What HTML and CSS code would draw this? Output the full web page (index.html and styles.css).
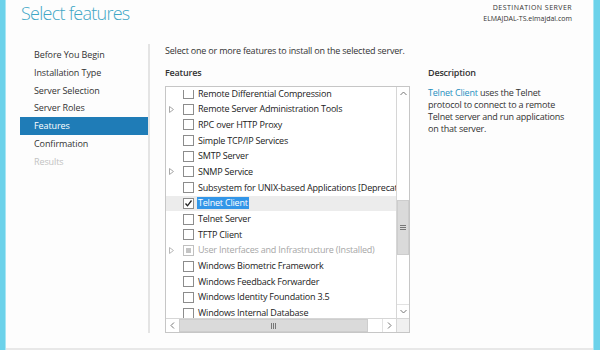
FILE: index.html
```html
<!DOCTYPE html>
<html>
<head>
<meta charset="utf-8">
<link rel="stylesheet" href="styles.css">
</head>
<body>
<div class="window">
  <div class="edge edge-left"></div>
  <div class="main">
    <header class="header">
      <h1 class="title">Select features</h1>
      <div class="dest">
        <div class="dest-cap">DESTINATION SERVER</div>
        <div>ELMAJDAL-TS.elmajdal.com</div>
      </div>
    </header>
    <div class="body">
      <nav class="nav">
        <div class="nav-item">Before You Begin</div>
        <div class="nav-item">Installation Type</div>
        <div class="nav-item">Server Selection</div>
        <div class="nav-item">Server Roles</div>
        <div class="nav-item active">Features</div>
        <div class="nav-item">Confirmation</div>
        <div class="nav-item disabled">Results</div>
      </nav>
      <section class="content">
        <p class="intro">Select one or more features to install on the selected server.</p>
        <div class="columns">
          <div class="features-col">
            <div class="label">Features</div>
            <div class="listbox">
              <div class="viewport">
                <div class="clip">
                  <ul class="rows">
                    <li class="row"><span class="exp"></span><span class="cb"></span><span class="txt">Remote Differential Compression</span></li>
                    <li class="row"><span class="exp"><svg width="5" height="7" viewBox="0 0 5 7"><polygon points="0.5,0.5 4.5,3.5 0.5,6.5" fill="none" stroke="#a8a8a8" stroke-width="1"/></svg></span><span class="cb"></span><span class="txt">Remote Server Administration Tools</span></li>
                    <li class="row"><span class="exp"></span><span class="cb"></span><span class="txt">RPC over HTTP Proxy</span></li>
                    <li class="row"><span class="exp"></span><span class="cb"></span><span class="txt">Simple TCP/IP Services</span></li>
                    <li class="row"><span class="exp"></span><span class="cb"></span><span class="txt">SMTP Server</span></li>
                    <li class="row"><span class="exp"><svg width="5" height="7" viewBox="0 0 5 7"><polygon points="0.5,0.5 4.5,3.5 0.5,6.5" fill="none" stroke="#a8a8a8" stroke-width="1"/></svg></span><span class="cb"></span><span class="txt">SNMP Service</span></li>
                    <li class="row"><span class="exp"></span><span class="cb"></span><span class="txt">Subsystem for UNIX-based Applications [Deprecated]</span></li>
                    <li class="row selected"><span class="exp"></span><span class="cb"><svg width="9" height="9" viewBox="0 0 9 9"><polyline points="1.5,4.5 3.5,6.8 7.5,1.5" fill="none" stroke="#222" stroke-width="1.3"/></svg></span><span class="txt sel">Telnet Client</span></li>
                    <li class="row"><span class="exp"></span><span class="cb"></span><span class="txt">Telnet Server</span></li>
                    <li class="row"><span class="exp"></span><span class="cb"></span><span class="txt">TFTP Client</span></li>
                    <li class="row dis"><span class="exp"><svg width="5" height="7" viewBox="0 0 5 7"><polygon points="0.5,0.5 4.5,3.5 0.5,6.5" fill="none" stroke="#b8b8b8" stroke-width="1"/></svg></span><span class="cb ind"><span class="ind-box"></span></span><span class="txt">User Interfaces and Infrastructure (Installed)</span></li>
                    <li class="row"><span class="exp"></span><span class="cb"></span><span class="txt">Windows Biometric Framework</span></li>
                    <li class="row"><span class="exp"></span><span class="cb"></span><span class="txt">Windows Feedback Forwarder</span></li>
                    <li class="row"><span class="exp"></span><span class="cb"></span><span class="txt">Windows Identity Foundation 3.5</span></li>
                    <li class="row"><span class="exp"></span><span class="cb"></span><span class="txt">Windows Internal Database</span></li>
                    <li class="row"><span class="exp"></span><span class="cb"></span><span class="txt">Windows PowerShell</span></li>
                  </ul>
                </div>
              </div>
              <div class="vscroll">
                <div class="sbtn"><svg width="7" height="5" viewBox="0 0 7 5"><polyline points="0.5,4 3.5,1 6.5,4" fill="none" stroke="#777" stroke-width="1"/></svg></div>
                <div class="vtrack">
                  <div class="vthumb"><svg width="6" height="5" viewBox="0 0 6 5"><path d="M0 0.5H6M0 2.5H6M0 4.5H6" stroke="#777" stroke-width="1"/></svg></div>
                </div>
                <div class="sbtn"><svg width="7" height="5" viewBox="0 0 7 5"><polyline points="0.5,1 3.5,4 6.5,1" fill="none" stroke="#777" stroke-width="1"/></svg></div>
              </div>
              <div class="hscroll">
                <div class="sbtn"><svg width="5" height="7" viewBox="0 0 5 7"><polyline points="4,0.5 1,3.5 4,6.5" fill="none" stroke="#777" stroke-width="1"/></svg></div>
                <div class="htrack">
                  <div class="hthumb"><svg width="5" height="6" viewBox="0 0 5 6"><path d="M0.5 0V6M2.5 0V6M4.5 0V6" stroke="#777" stroke-width="1"/></svg></div>
                </div>
                <div class="sbtn"><svg width="5" height="7" viewBox="0 0 5 7"><polyline points="1,0.5 4,3.5 1,6.5" fill="none" stroke="#777" stroke-width="1"/></svg></div>
              </div>
              <div class="corner"></div>
            </div>
          </div>
          <div class="desc-col">
            <div class="label">Description</div>
            <p class="desc"><span class="link">Telnet Client</span> uses the Telnet protocol to connect to a remote Telnet server and run applications on that server.</p>
          </div>
        </div>
      </section>
    </div>
    <div class="spacer"></div>
    <div class="bottom"></div>
  </div>
  <div class="edge edge-right"></div>
</div>
</body>
</html>
```

FILE: styles.css
```css
* { box-sizing: border-box; }
html, body { margin: 0; padding: 0; }
body {
  width: 600px;
  height: 350px;
  overflow: hidden;
  background: #fdfdfd;
  font-family: "Open Sans", "Noto Sans", sans-serif;
  color: #333;
  letter-spacing: -0.2px;
}
.window {
  display: flex;
  width: 600px;
  height: 350px;
}
.edge { flex: none; background: #6cd2ea; }
.edge-left { width: 6px; border-right: 1px solid #a8e6f4; }
.edge-right { width: 7px; border-left: 1px solid #a8e6f4; }
.main {
  flex: 1;
  display: flex;
  flex-direction: column;
  min-width: 0;
}
.header {
  height: 44px;
  display: flex;
  justify-content: space-between;
  align-items: flex-start;
  padding: 0 21px 0 15px;
}
.title {
  margin: 0;
  padding-top: 1px;
  font-size: 18px;
  line-height: 24px;
  font-weight: 300;
  letter-spacing: -0.75px;
  color: #3ea6c6;
}
.dest {
  padding-top: 2px;
  text-align: right;
  font-size: 7px;
  line-height: 11px;
  letter-spacing: 0;
  color: #333;
}
.dest-cap { letter-spacing: 0.45px; }
.body {
  display: flex;
  height: 289px;
}
.nav {
  width: 144px;
  flex: none;
  border-right: 2px solid #e4e4e4;
  padding: 2px 0 0 14px;
}
.nav-item {
  height: 17.8px;
  line-height: 17.8px;
  padding-left: 14px;
  font-size: 9px;
  letter-spacing: -0.1px;
  color: #333;
}
.nav-item.active { background: #1f7cb7; color: #fff; }
.nav-item.disabled { color: #c2c2c2; }
.content {
  flex: 1;
  padding: 1px 0 0 15px;
}
.intro {
  margin: 0;
  font-size: 9px;
  line-height: 12px;
}
.columns {
  display: flex;
  gap: 18px;
  margin-top: 10px;
}
.label {
  font-size: 9px;
  line-height: 12px;
  font-weight: 600;
  color: #333;
}
.features-col { width: 245px; flex: none; }
.listbox {
  margin-top: 7px;
  height: 247px;
  border: 1px solid #c6c6c6;
  display: grid;
  grid-template-columns: 1fr 13px;
  grid-template-rows: 1fr 14px;
  background: #fff;
}
.viewport {
  padding-top: 3px;
  overflow: hidden;
  min-height: 0;
}
.clip { height: 100%; overflow: hidden; }
.rows {
  list-style: none;
  margin: -4.3px 0 0 0;
  padding: 0;
}
.row {
  height: 15.7px;
  display: flex;
  align-items: center;
  white-space: nowrap;
  font-size: 9px;
  color: #222;
}
.row.selected { background: #ececec; }
.row.dis { color: #a6a6a6; }
.exp {
  width: 17px;
  flex: none;
  display: flex;
  align-items: center;
  padding-left: 3px;
}
.exp svg { display: block; }
.cb {
  width: 11px;
  height: 11px;
  flex: none;
  border: 1px solid #8c8c8c;
  background: #fff;
  display: flex;
  align-items: center;
  justify-content: center;
}
.cb svg { display: block; }
.cb.ind { border-color: #c0c0c0; }
.ind-box { width: 5px; height: 5px; background: #c4c4c4; }
.txt { margin-left: 4px; line-height: 12px; }
.txt.sel { background: #3396e8; color: #fff; padding: 0 1px; margin-left: 3px; }
.vscroll {
  border-left: 1px solid #d6d6d6;
  display: flex;
  flex-direction: column;
  min-height: 0;
}
.sbtn {
  flex: none;
  display: flex;
  align-items: center;
  justify-content: center;
  background: #fff;
}
.vscroll .sbtn { height: 13px; }
.vscroll .sbtn:last-child { border-top: 1px solid #e2e2e2; height: 14px; }
.vtrack { flex: 1; }
.vthumb {
  margin-top: 100px;
  height: 55px;
  background: #dadada;
  border: 1px solid #cdcdcd;
  display: flex;
  align-items: center;
  justify-content: center;
}
.hscroll {
  border-top: 1px solid #d6d6d6;
  display: flex;
}
.hscroll .sbtn { width: 13px; }
.hscroll .sbtn:last-child { border-left: 1px solid #e2e2e2; width: 14px; }
.htrack { flex: 1; display: flex; }
.hthumb {
  width: 189px;
  background: #dadada;
  border: 1px solid #cdcdcd;
  display: flex;
  align-items: center;
  justify-content: center;
}
.corner { background: #f0f0f0; border-top: 1px solid #d6d6d6; border-left: 1px solid #d6d6d6; }
.desc-col { flex: 1; padding-right: 20px; }
.desc {
  margin: 8px 0 0 0;
  font-size: 9px;
  line-height: 12px;
  color: #333;
}
.link { color: #1f8fbf; }
.spacer { flex: 1; }
.bottom { height: 2px; background: #e8e8e8; }
```
